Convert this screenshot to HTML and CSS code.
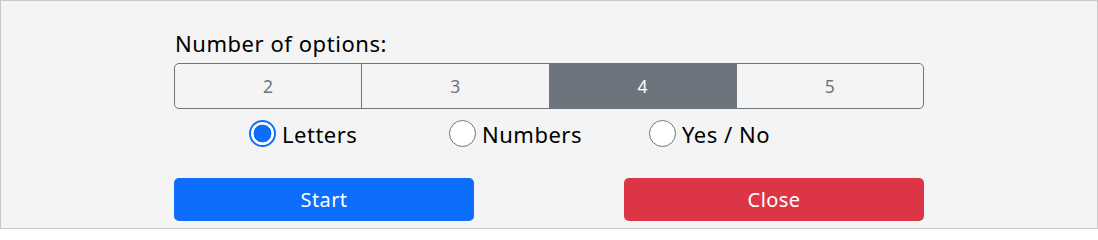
FILE: index.html
```html
<!DOCTYPE html>
<html lang="en">
<head>
<meta charset="utf-8">
<title>Options</title>
<link rel="stylesheet" href="styles.css">
</head>
<body>
<div class="frame">
  <div class="panel">
    <div class="label">Number of options:</div>
    <div class="btn-group">
      <button class="seg">2</button>
      <button class="seg">3</button>
      <button class="seg active">4</button>
      <button class="seg">5</button>
    </div>
    <div class="radios">
      <label class="radio"><span class="circle checked"></span><span>Letters</span></label>
      <label class="radio"><span class="circle"></span><span>Numbers</span></label>
      <label class="radio"><span class="circle"></span><span>Yes / No</span></label>
    </div>
    <div class="actions">
      <button class="btn start">Start</button>
      <button class="btn close">Close</button>
    </div>
  </div>
</div>
</body>
</html>
```
FILE: styles.css
```css
html, body {
  margin: 0;
  padding: 0;
}
body {
  font-family: "Noto Sans", "Open Sans", sans-serif;
  color: #000;
}
.frame {
  width: 1098px;
  height: 229px;
  box-sizing: border-box;
  border: 1px solid #c8c8c8;
  background: #f4f4f4;
  display: flex;
  justify-content: center;
}
.panel {
  width: 750px;
  padding-top: 28px;
  display: flex;
  flex-direction: column;
}
.panel > * {
  flex: none;
}
.label {
  font-size: 22px;
  letter-spacing: 0.55px;
  line-height: 28px;
  height: 28px;
  margin-left: 1px;
  margin-bottom: 6px;
}
.btn-group {
  display: flex;
  height: 46px;
  border: 1px solid #6c757d;
  border-radius: 5px;
  overflow: hidden;
  box-sizing: border-box;
}
.seg {
  flex: 1;
  margin: 0;
  border: 0;
  border-left: 1px solid #6c757d;
  background: transparent;
  color: #6c757d;
  font-family: inherit;
  font-size: 17.5px;
  padding: 0;
}
.seg:first-child {
  border-left: 0;
}
.seg.active {
  background: #6c757d;
  color: #fff;
}
.radios {
  display: flex;
  justify-content: center;
  margin-top: 11px;
  height: 27px;
}
.radio {
  width: 200px;
  display: flex;
  align-items: center;
  gap: 6px;
  font-size: 22px;
  letter-spacing: 0.5px;
}
.circle {
  width: 27px;
  height: 27px;
  box-sizing: border-box;
  border-radius: 50%;
  border: 1px solid #6c757d;
  background: #fff;
  flex: none;
}
.circle.checked {
  border: 2px solid #0d6efd;
  background: radial-gradient(circle, #0d6efd 0 8.6px, #fff 9.2px);
}
.actions {
  display: flex;
  justify-content: space-between;
  margin-top: 31px;
}
.btn {
  width: 300px;
  height: 43px;
  margin: 0;
  border: 0;
  border-radius: 5px;
  color: #fff;
  font-family: inherit;
  font-size: 20px;
  letter-spacing: 0.4px;
  padding: 0;
}
.start {
  background: #0d6efd;
}
.close {
  background: #dc3545;
}
```
